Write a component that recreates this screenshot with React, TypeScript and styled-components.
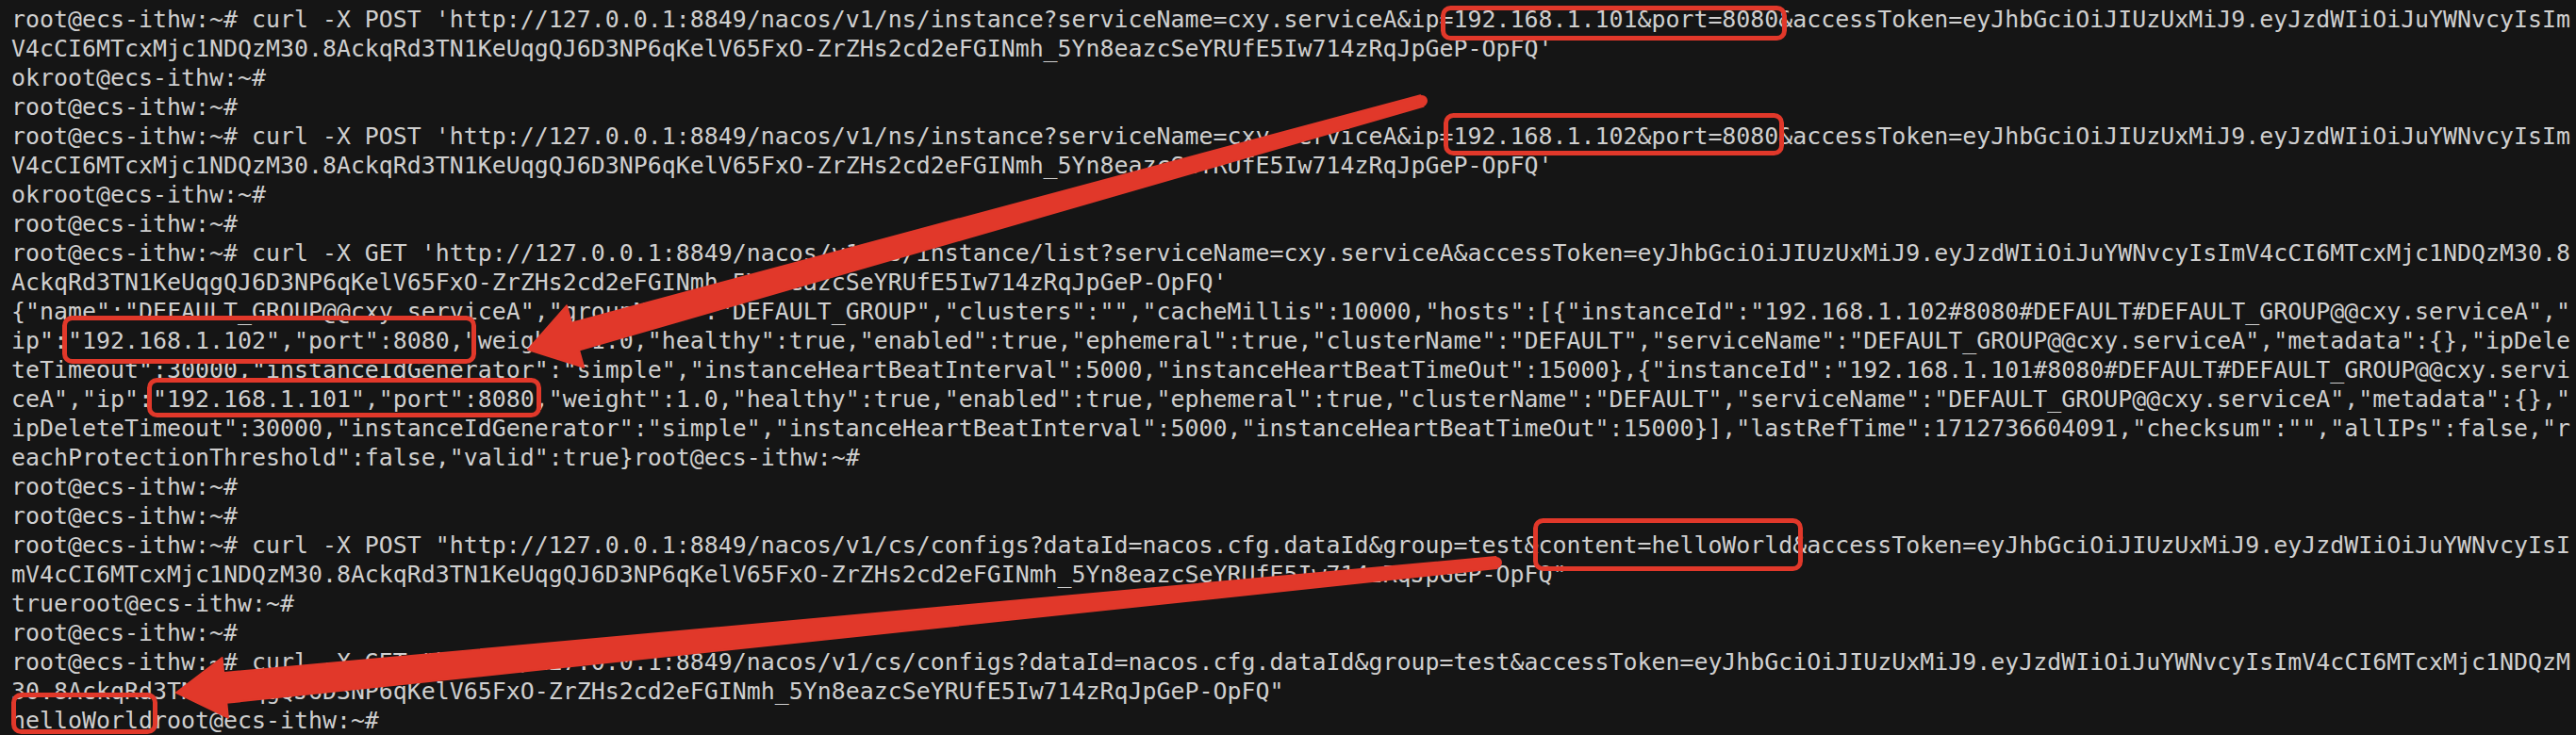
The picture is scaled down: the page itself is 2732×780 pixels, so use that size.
import React from "react";
import styled, { createGlobalStyle } from "styled-components";

const GlobalStyle = createGlobalStyle`
  html, body {
    margin: 0;
    padding: 0;
    background: #151515;
  }
  body {
    overflow: hidden;
  }
`;

const COLS = 181;
const PROMPT = "root@ecs-ithw:~#";
const HOST = "http://127.0.0.1:8849/nacos/v1";
const TOKEN =
  "eyJhbGciOiJIUzUxMiJ9.eyJzdWIiOiJuYWNvcyIsImV4cCI6MTcxMjc1NDQzM30.8AckqRd3TN1KeUqgQJ6D3NP6qKelV65FxO-ZrZHs2cd2eFGINmh_5Yn8eazcSeYRUfE5Iw714zRqJpGeP-OpFQ";

const host = (ip: string) =>
  `{"instanceId":"${ip}#8080#DEFAULT#DEFAULT_GROUP@@cxy.serviceA","ip":"${ip}","port":8080,"weight":1.0,"healthy":true,"enabled":true,"ephemeral":true,"clusterName":"DEFAULT","serviceName":"DEFAULT_GROUP@@cxy.serviceA","metadata":{},"ipDeleteTimeout":30000,"instanceIdGenerator":"simple","instanceHeartBeatInterval":5000,"instanceHeartBeatTimeOut":15000}`;

const listing =
  `{"name":"DEFAULT_GROUP@@cxy.serviceA","groupName":"DEFAULT_GROUP","clusters":"","cacheMillis":10000,"hosts":[` +
  `${host("192.168.1.102")},${host("192.168.1.101")}` +
  `],"lastRefTime":1712736604091,"checksum":"","allIPs":false,"reachProtectionThreshold":false,"valid":true}`;

// what was typed / printed, before the terminal wraps it
const session: string[] = [
  `${PROMPT} curl -X POST '${HOST}/ns/instance?serviceName=cxy.serviceA&ip=192.168.1.101&port=8080&accessToken=${TOKEN}'`,
  `ok${PROMPT}`,
  PROMPT,
  `${PROMPT} curl -X POST '${HOST}/ns/instance?serviceName=cxy.serviceA&ip=192.168.1.102&port=8080&accessToken=${TOKEN}'`,
  `ok${PROMPT}`,
  PROMPT,
  `${PROMPT} curl -X GET '${HOST}/ns/instance/list?serviceName=cxy.serviceA&accessToken=${TOKEN}'`,
  `${listing}${PROMPT}`,
  PROMPT,
  PROMPT,
  `${PROMPT} curl -X POST "${HOST}/cs/configs?dataId=nacos.cfg.dataId&group=test&content=helloWorld&accessToken=${TOKEN}"`,
  `true${PROMPT}`,
  PROMPT,
  `${PROMPT} curl -X GET "${HOST}/cs/configs?dataId=nacos.cfg.dataId&group=test&accessToken=${TOKEN}"`,
  `helloWorld${PROMPT}`,
];

function wrap(text: string, cols: number) {
  const out: string[] = [];
  for (let i = 0; i < text.length; i += cols) out.push(text.slice(i, i + cols));
  return out.length ? out : [""];
}

const rows = session.flatMap((s) => wrap(s, COLS));

const Screen = styled.div`
  position: relative;
  width: 2732px;
  height: 780px;
  box-sizing: border-box;
  padding: 5px 0 0 12px;
  background: #151515;
  overflow: hidden;
`;

const Row = styled.div`
  height: 31px;
  line-height: 31px;
  font-family: "DejaVu Sans Mono", "Liberation Mono", monospace;
  font-size: 24.92px;
  color: #cfcfcf;
  white-space: pre;
`;

const Marks = styled.svg`
  position: absolute;
  left: 0;
  top: 0;
  pointer-events: none;
`;

const RED = "#e1382a";

type Pt = [number, number];

interface ArrowProps {
  tail: Pt;
  tip: Pt;
  tailWidth: number;
  neckWidth: number;
  headLength: number;
  headHalf: number;
}

function Arrow({ tail, tip, tailWidth, neckWidth, headLength, headHalf }: ArrowProps) {
  const dx = tip[0] - tail[0];
  const dy = tip[1] - tail[1];
  const len = Math.hypot(dx, dy);
  const u: Pt = [dx / len, dy / len];
  const n: Pt = [-u[1], u[0]];
  const base: Pt = [tip[0] - u[0] * headLength, tip[1] - u[1] * headLength];
  const at = (p: Pt, k: number): string =>
    `${(p[0] + n[0] * k).toFixed(1)},${(p[1] + n[1] * k).toFixed(1)}`;
  const points = [
    at(tail, tailWidth / 2),
    at(base, neckWidth / 2),
    at(base, headHalf),
    `${tip[0]},${tip[1]}`,
    at(base, -headHalf),
    at(base, -neckWidth / 2),
    at(tail, -tailWidth / 2),
  ].join(" ");
  return (
    <g fill={RED}>
      <polygon points={points} strokeLinejoin="round" stroke={RED} strokeWidth={2} />
      <circle cx={tail[0]} cy={tail[1]} r={tailWidth / 2} />
    </g>
  );
}

interface BoxProps {
  x0: number;
  y0: number;
  x1: number;
  y1: number;
}

function Box({ x0, y0, x1, y1 }: BoxProps) {
  const w = 5;
  return (
    <rect
      x={x0 + w / 2}
      y={y0 + w / 2}
      width={x1 - x0 - w}
      height={y1 - y0 - w}
      rx={8}
      fill="none"
      stroke={RED}
      strokeWidth={w}
    />
  );
}

const boxes: BoxProps[] = [
  { x0: 1528, y0: 6, x1: 1895, y1: 43 },
  { x0: 1531, y0: 120, x1: 1892, y1: 165 },
  { x0: 66, y0: 335, x1: 505, y1: 386 },
  { x0: 156, y0: 401, x1: 574, y1: 443 },
  { x0: 1626, y0: 550, x1: 1912, y1: 606 },
  { x0: 12, y0: 735, x1: 167, y1: 779 },
];

export default function App() {
  return (
    <>
      <GlobalStyle />
      <Screen>
        {rows.map((r, i) => (
          <Row key={i}>{r}</Row>
        ))}
        <Marks width={2732} height={780} viewBox="0 0 2732 780">
          {boxes.map((b, i) => (
            <Box key={i} {...b} />
          ))}
          <Arrow
            tail={[1508, 107]}
            tip={[560, 371]}
            tailWidth={12}
            neckWidth={30}
            headLength={52}
            headHalf={34}
          />
          <Arrow
            tail={[1587, 597]}
            tip={[187, 735]}
            tailWidth={12}
            neckWidth={32}
            headLength={52}
            headHalf={32}
          />
        </Marks>
      </Screen>
    </>
  );
}
